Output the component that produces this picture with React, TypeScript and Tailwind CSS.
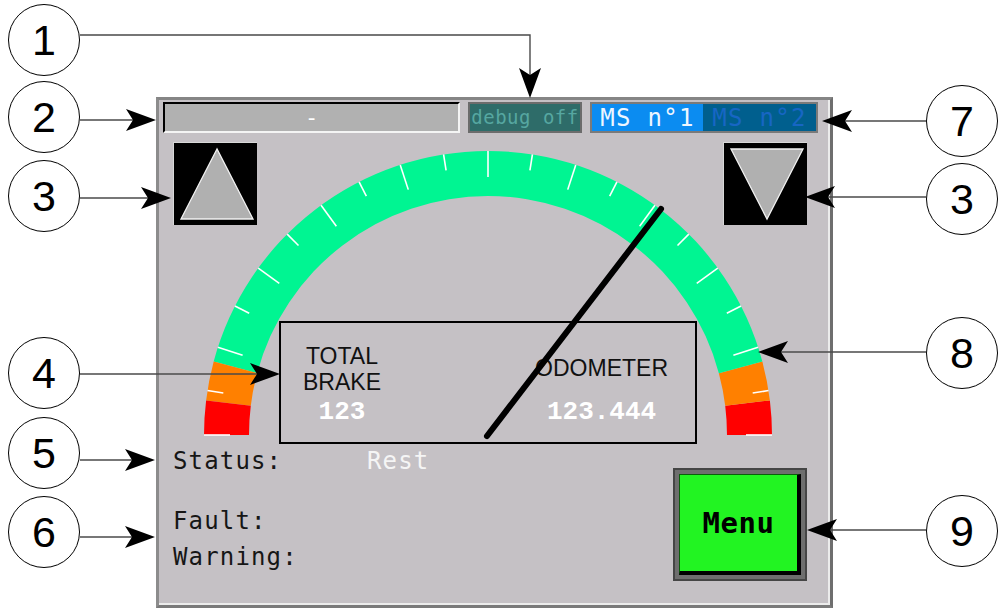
import type { ReactNode } from 'react'

// Gauge geometry, in the gauge svg's own coordinates
const CX = 329
const CY = 299
const R_OUT = 284
const R_IN = 239

const BANDS = [
  { from: 0, to: 7, color: '#ff0000' },
  { from: 7, to: 15, color: '#ff8000' },
  { from: 15, to: 165, color: '#00f592' },
  { from: 165, to: 173, color: '#ff8000' },
  { from: 173, to: 180, color: '#ff0000' },
]

const LEFT_CALLOUTS = [
  { n: '1', cy: 40 },
  { n: '2', cy: 117 },
  { n: '3', cy: 196 },
  { n: '4', cy: 373 },
  { n: '5', cy: 453 },
  { n: '6', cy: 532 },
]

const RIGHT_CALLOUTS = [
  { n: '7', cy: 121 },
  { n: '3', cy: 199 },
  { n: '8', cy: 353 },
  { n: '9', cy: 531 },
]

type Pt = [number, number]

function polar(a: number, r: number): Pt {
  const t = (a * Math.PI) / 180
  return [CX + r * Math.cos(t), CY - r * Math.sin(t)]
}

function sector(a0: number, a1: number) {
  const [x0, y0] = polar(a0, R_OUT)
  const [x1, y1] = polar(a1, R_OUT)
  const [x2, y2] = polar(a1, R_IN)
  const [x3, y3] = polar(a0, R_IN)
  return `M${x0} ${y0} A${R_OUT} ${R_OUT} 0 0 0 ${x1} ${y1} L${x2} ${y2} A${R_IN} ${R_IN} 0 0 1 ${x3} ${y3}Z`
}

function Gauge() {
  const ticks = Array.from({ length: 21 }, (_, k) => {
    const a = k * 9
    const len = k % 2 === 0 ? 26 : 16
    const [x1, y1] = polar(a, R_OUT)
    const [x2, y2] = polar(a, R_OUT - len)
    return <line key={k} x1={x1} y1={y1} x2={x2} y2={y2} stroke="#ffffff" strokeWidth={1.6} />
  })

  return (
    <svg width={671} height={312} viewBox="0 0 671 312" className="col-start-1 row-start-1">
      {BANDS.map(b => (
        <path key={b.from} d={sector(b.from, b.to)} fill={b.color} />
      ))}
      {ticks}
      {/* aiguille */}
      <line x1={328} y1={300} x2={502} y2={73} stroke="#000" strokeWidth={6} strokeLinecap="round" />
    </svg>
  )
}

function ArrowButton({ dir, className }: { dir: 'up' | 'down'; className: string }) {
  const points = dir === 'up' ? '43,6 7,76 79,76' : '7,6 79,6 43,76'
  return (
    <div
      className={`col-start-1 row-start-1 self-start mt-[6px] w-[84px] h-[83px] bg-black border-t border-l border-[#d8d8d8] ${className}`}
    >
      <svg width={83} height={82} viewBox="0 0 83 82">
        <polygon points={points} fill="#b0b0b0" stroke="#f2f2f2" strokeWidth={1.3} />
      </svg>
    </div>
  )
}

function Arrow({ from, tip, via }: { from: Pt; tip: Pt; via?: Pt }) {
  const start = via ?? from
  const dx = tip[0] - start[0]
  const dy = tip[1] - start[1]
  const len = Math.hypot(dx, dy)
  const ux = dx / len
  const uy = dy / len
  const nx = -uy
  const ny = ux
  const back: Pt = [tip[0] - 30 * ux, tip[1] - 30 * uy]
  const notch: Pt = [tip[0] - 23 * ux, tip[1] - 23 * uy]
  const head = [
    tip,
    [back[0] + 11 * nx, back[1] + 11 * ny],
    notch,
    [back[0] - 11 * nx, back[1] - 11 * ny],
  ]
    .map(p => p.join(','))
    .join(' ')
  const line = via ? [from, via, notch] : [from, notch]
  return (
    <g>
      <polyline points={line.map(p => p.join(',')).join(' ')} fill="none" stroke="#4a4a4a" strokeWidth={1.4} />
      <polygon points={head} fill="#000" />
    </g>
  )
}

function Callout({ n, left, cy }: { n: string; left: number; cy: number }): ReactNode {
  return (
    <div
      className="absolute w-[72px] h-[72px] rounded-full border-[1.5px] border-black bg-white flex items-center justify-center text-[43px] leading-none text-black font-['Liberation_Sans',Arial,sans-serif]"
      style={{ left, top: cy - 36 }}
    >
      {n}
    </div>
  )
}

export default function App() {
  const mono = "font-['DejaVu_Sans_Mono',monospace]"

  return (
    <div className="relative w-[1007px] h-[616px] bg-white overflow-hidden pl-[156px] pt-[97px]">
      {/* Écran */}
      <div className="w-[677px] h-[511px] flex flex-col bg-[#c5c1c5] border-[3px] border-t-[#858585] border-l-[#8c8c8c] border-b-[#7a7a7a] border-r-[#6e6e6e] shadow-[inset_-2px_-2px_0_#ececec]">
        {/* Barre du haut */}
        <div className="h-[36px] flex items-start gap-2 pl-1 pt-0.5">
          <div className="w-[297px] h-[31px] flex items-center justify-center bg-[#b1b1b1] border-2 border-t-black border-l-black border-b-[#f4f4f4] border-r-[#f4f4f4] text-white text-[22px] leading-none">
            <span className={mono}>-</span>
          </div>
          <div
            className={`w-[114px] h-[31px] flex items-center justify-center bg-[#2e6c69] border-2 border-[#6c6c6c] text-[#56a7a1] text-[19px] tracking-[0.5px] leading-none ${mono}`}
          >
            debug off
          </div>
          <div className={`w-[228px] h-[31px] flex border-2 border-[#7a7a7a] text-[24px] tracking-[1.3px] leading-none ${mono}`}>
            <div className="w-[111px] flex items-center justify-center bg-[#0b8cf1] text-[#eef6ff]">MS n°1</div>
            <div className="flex-1 flex items-center justify-center bg-[#005f8e] text-[#1766c4]">MS n°2</div>
          </div>
        </div>

        {/* Jauge */}
        <div className="grid h-[312px] w-[671px]">
          <div className="col-start-1 row-start-1 self-start justify-self-start ml-[120px] mt-[185px] w-[418px] h-[123px] border-2 border-black flex justify-between">
            <div className="flex flex-col items-center pl-[22px] pt-[20px]">
              <div className="text-center text-[23px] leading-[26px] text-[#111] font-['Liberation_Sans',Arial,sans-serif]">
                TOTAL
                <br />
                BRAKE
              </div>
              <div className="mt-[4px] text-[26px] leading-[26px] font-bold text-white font-['Liberation_Mono',monospace]">123</div>
            </div>
            <div className="flex flex-col items-center pr-[27px] pt-[32px]">
              <div className="text-[23px] leading-[26px] text-[#111] font-['Liberation_Sans',Arial,sans-serif]">ODOMETER</div>
              <div className="mt-[18px] text-[26px] leading-[26px] font-bold text-white font-['Liberation_Mono',monospace]">123.444</div>
            </div>
          </div>
          <Gauge />
          <ArrowButton dir="up" className="justify-self-start ml-[14px]" />
          <ArrowButton dir="down" className="justify-self-end mr-[23px]" />
        </div>

        {/* Bas : états + menu */}
        <div className="flex-1 flex justify-between">
          <div className={`pl-[14px] pt-[1px] flex flex-col text-[24px] leading-[24px] tracking-[1.15px] text-[#161616] ${mono}`}>
            <div className="flex">
              <span className="w-[194px]">Status:</span>
              <span className="text-[#f5f5f5]">Rest</span>
            </div>
            <div className="mt-[36px]">Fault:</div>
            <div className="mt-[12px]">Warning:</div>
          </div>
          <div className="mt-[20px] mr-[23px] w-[134px] h-[113px] border-2 border-[#454545] bg-[#6e6e6e] p-[4px]">
            <div
              className={`w-full h-full flex items-center justify-center bg-[#22f422] border-t border-l border-[#0b5e0b] border-b-[4px] border-r-[4px] border-b-black border-r-black text-[29px] font-bold tracking-[0.6px] text-black leading-none ${mono}`}
            >
              Menu
            </div>
          </div>
        </div>
      </div>

      {/* Repères numérotés */}
      {LEFT_CALLOUTS.map(c => (
        <Callout key={`l${c.n}`} n={c.n} left={8} cy={c.cy} />
      ))}
      {RIGHT_CALLOUTS.map(c => (
        <Callout key={`r${c.n}`} n={c.n} left={926} cy={c.cy} />
      ))}

      <svg width={1007} height={616} className="absolute inset-0 pointer-events-none">
        <Arrow from={[80, 35]} via={[530, 35]} tip={[530, 98]} />
        <Arrow from={[80, 120]} tip={[156, 120]} />
        <Arrow from={[80, 198]} tip={[171, 198]} />
        <Arrow from={[80, 374]} tip={[280, 374]} />
        <Arrow from={[80, 460]} tip={[155, 460]} />
        <Arrow from={[80, 537]} tip={[155, 537]} />
        <Arrow from={[926, 121]} tip={[822, 121]} />
        <Arrow from={[926, 197]} tip={[805, 197]} />
        <Arrow from={[926, 352]} tip={[758, 352]} />
        <Arrow from={[926, 530]} tip={[807, 530]} />
      </svg>
    </div>
  )
}
